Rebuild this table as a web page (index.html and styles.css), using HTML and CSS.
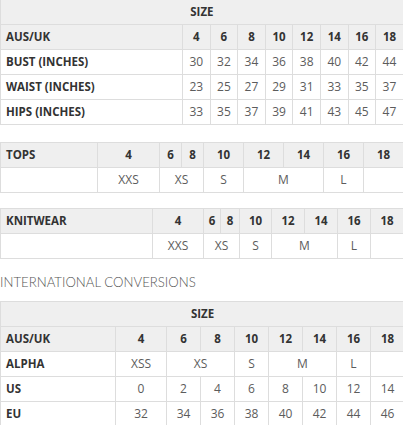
FILE: index.html
```html
<!DOCTYPE html>
<html>
<head>
<meta charset="utf-8">
<link rel="stylesheet" href="styles.css">
</head>
<body>
<div class="page">
  <table class="chart chart-main">
    <colgroup><col class="c-label"><col span="8" class="c-size"></colgroup>
    <tr class="head"><td colspan="9" class="center">SIZE</td></tr>
    <tr class="head"><td>AUS/UK</td><td>4</td><td>6</td><td>8</td><td>10</td><td>12</td><td>14</td><td>16</td><td>18</td></tr>
    <tr><th>BUST (INCHES)</th><td>30</td><td>32</td><td>34</td><td>36</td><td>38</td><td>40</td><td>42</td><td>44</td></tr>
    <tr><th>WAIST (INCHES)</th><td>23</td><td>25</td><td>27</td><td>29</td><td>31</td><td>33</td><td>35</td><td>37</td></tr>
    <tr><th>HIPS (INCHES)</th><td>33</td><td>35</td><td>37</td><td>39</td><td>41</td><td>43</td><td>45</td><td>47</td></tr>
  </table>

  <table class="chart chart-tops">
    <colgroup><col class="t0"><col class="t1"><col class="t2"><col class="t2"><col span="5" class="t3"></colgroup>
    <tr class="head"><td>TOPS</td><td>4</td><td>6</td><td>8</td><td>10</td><td>12</td><td>14</td><td>16</td><td>18</td></tr>
    <tr><th></th><td>XXS</td><td colspan="2">XS</td><td>S</td><td colspan="2">M</td><td>L</td><td></td></tr>
  </table>

  <table class="chart chart-knit">
    <colgroup><col class="k0"><col class="k1"><col class="k2"><col class="k3"><col class="k4"><col span="4" class="k5"></colgroup>
    <tr class="head"><td>KNITWEAR</td><td>4</td><td>6</td><td>8</td><td>10</td><td>12</td><td>14</td><td>16</td><td>18</td></tr>
    <tr><th></th><td>XXS</td><td colspan="2">XS</td><td>S</td><td colspan="2">M</td><td>L</td><td></td></tr>
  </table>

  <h2 class="section-title">INTERNATIONAL CONVERSIONS</h2>

  <table class="chart chart-intl">
    <colgroup><col class="i0"><col class="i1"><col span="7" class="i2"></colgroup>
    <tr class="head"><td colspan="9" class="center">SIZE</td></tr>
    <tr class="head"><td>AUS/UK</td><td>4</td><td>6</td><td>8</td><td>10</td><td>12</td><td>14</td><td>16</td><td>18</td></tr>
    <tr><th>ALPHA</th><td>XSS</td><td colspan="2">XS</td><td>S</td><td colspan="2">M</td><td>L</td><td></td></tr>
    <tr><th>US</th><td>0</td><td>2</td><td>4</td><td>6</td><td>8</td><td>10</td><td>12</td><td>14</td></tr>
    <tr><th>EU</th><td>32</td><td>34</td><td>36</td><td>38</td><td>40</td><td>42</td><td>44</td><td>46</td></tr>
  </table>
</div>
</body>
</html>
```

FILE: styles.css
```css
html, body {
  margin: 0;
  padding: 0;
  background: #ffffff;
}

.page {
  width: 403px;
  font-family: "Open Sans", "DejaVu Sans", sans-serif;
}

.chart {
  width: 403px;
  table-layout: fixed;
  border-collapse: collapse;
  margin: 0;
}

.chart td,
.chart th {
  height: 24px;
  padding: 0;
  border: 1px solid #dddddd;
  font-size: 12px;
  line-height: 14px;
  text-align: center;
  color: #5c5c5c;
  font-weight: 400;
  white-space: nowrap;
  overflow: hidden;
}

.chart th {
  text-align: left;
  padding-left: 5px;
  color: #333333;
  font-weight: 700;
  font-size: 11.5px;
}

.chart .head td {
  background: #efefef;
  color: #333333;
  font-weight: 700;
  font-size: 11.5px;
}

.chart .head td:first-child {
  text-align: left;
  padding-left: 5px;
}

.chart .head td.center {
  text-align: center;
  padding-left: 0;
}

.chart-main { margin-top: -1px; }
.chart-tops { margin-top: 17px; }
.chart-knit { margin-top: 15px; }
.chart-intl { margin-top: 0; }

.c-label { width: 182px; }
.c-size { width: 27.6px; }

.t0 { width: 97px; }
.t1 { width: 62px; }
.t2 { width: 22px; }
.t3 { width: 40px; }

.k0 { width: 152px; }
.k1 { width: 51px; }
.k2 { width: 17px; }
.k3 { width: 19px; }
.k4 { width: 32px; }
.k5 { width: 33px; }

.i0 { width: 115px; }
.i1 { width: 51px; }
.i2 { width: 34px; }

.section-title {
  margin: 0;
  height: 42px;
  padding-top: 13px;
  box-sizing: border-box;
  font-family: "Lato", sans-serif;
  font-weight: 300;
  font-size: 13.2px;
  line-height: 20px;
  color: #555555;
  letter-spacing: 0;
}
```
